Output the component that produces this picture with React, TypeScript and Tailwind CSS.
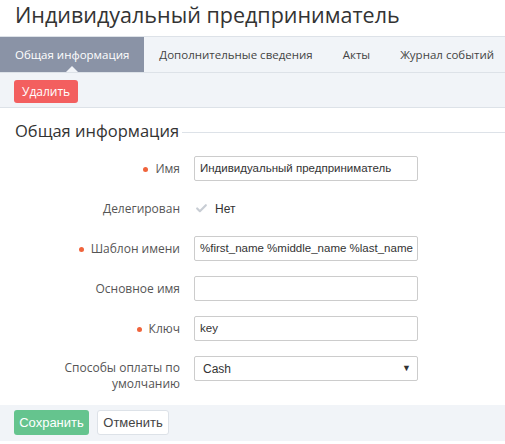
import { Check } from "lucide-react"

const OPEN = "font-['Open_Sans',sans-serif]"
const ARIAL = "font-['Liberation_Sans',Arial,sans-serif]"

const TABS = ["Общая информация", "Дополнительные сведения", "Акты", "Журнал событий"]

function Dot() {
  return <span className="inline-block w-[5px] h-[5px] rounded-full bg-[#f0643c] mr-[7px] mb-[1px]" />
}

function Row({ label, required, children, tall }: { label: React.ReactNode; required?: boolean; children: React.ReactNode; tall?: boolean }) {
  return (
    <div className={`flex ${tall ? "items-start min-h-[40px]" : "items-center min-h-[25px]"}`}>
      <div className={`w-[180px] text-right text-[12px] text-[#555] ${OPEN} ${tall ? "pt-[4px] leading-[16px]" : ""}`}>
        {required && <Dot />}
        {label}
      </div>
      <div className="ml-[14px] w-[224px]">{children}</div>
    </div>
  )
}

function Input({ value }: { value?: string }) {
  return (
    <div className={`h-[25px] border border-[#ccc] rounded-[2px] bg-white px-[5px] flex items-center overflow-hidden whitespace-nowrap text-[11.5px] text-[#333] ${ARIAL}`}>
      {value}
    </div>
  )
}

export default function App() {
  return (
    <div className="w-[505px] h-[444px] bg-white overflow-hidden">
      <h1 className={`h-[36px] pl-[15px] text-[21.5px] leading-[30px] text-[#333] ${OPEN}`}>Индивидуальный предприниматель</h1>

      <div className="flex h-[37px] bg-[#f1f4f8] border-t border-b border-[#dde2e8]">
        {TABS.map((t, i) => (
          <div
            key={t}
            className={`relative px-[15px] flex items-center text-[11.5px] whitespace-nowrap ${OPEN} ${i === 0 ? "bg-[#8a93a6] text-white" : "text-[#444]"}`}
          >
            {t}
            {i === 0 && (
              <span className="absolute bottom-0 left-[66px] w-0 h-0 border-l-[6px] border-r-[6px] border-b-[6px] border-l-transparent border-r-transparent border-b-[#f1f4f8]" />
            )}
          </div>
        ))}
      </div>

      <div className="h-[35px] bg-[#f1f4f8] border-b border-[#dde2e8] px-[14px] pt-[5px]">
        <button className={`h-[23px] px-[8px] rounded-[3px] bg-[#f35f5f] text-white text-[12px] leading-[23px] ${OPEN}`}>Удалить</button>
      </div>

      <div className="pt-[11px]">
        <div className="flex items-center h-[24px] pl-[15px]">
          <span className={`text-[16.5px] text-[#333] ${OPEN}`}>Общая информация</span>
          <span className="flex-1 h-px bg-[#dde2e8] ml-[3px] mt-[2px]" />
        </div>

        <div className="mt-[13px] flex flex-col gap-[15px]">
          <Row label="Имя" required>
            <Input value="Индивидуальный предприниматель" />
          </Row>
          <Row label="Делегирован">
            <div className={`flex items-center h-[25px] text-[12px] text-[#333] ${ARIAL}`}>
              <Check size={13} strokeWidth={4} className="text-[#c8cdd4] ml-[1px] mr-[7px]" />
              Нет
            </div>
          </Row>
          <Row label="Шаблон имени" required>
            <Input value="%first_name %middle_name %last_name" />
          </Row>
          <Row label="Основное имя">
            <Input />
          </Row>
          <Row label="Ключ" required>
            <Input value="key" />
          </Row>
          <Row label={<>Способы оплаты по<br />умолчанию</>} tall>
            <div className={`h-[25px] border border-[#ccc] rounded-[2px] bg-white pl-[8px] pr-[6px] flex items-center justify-between text-[12px] text-[#333] ${ARIAL}`}>
              Cash
              <span className="text-[9px] text-[#333]">▼</span>
            </div>
          </Row>
        </div>
      </div>

      <div className="mt-[9px] h-[36px] bg-[#f1f4f8] px-[14px] pt-[5px] flex gap-[8px]">
        <button className={`h-[25px] w-[75px] rounded-[3px] bg-[#65c48e] text-white text-[13px] ${ARIAL}`}>Сохранить</button>
        <button className={`h-[25px] w-[72px] rounded-[3px] bg-white border border-[#dde2e8] text-[#444] text-[13px] ${ARIAL}`}>Отменить</button>
      </div>
    </div>
  )
}
